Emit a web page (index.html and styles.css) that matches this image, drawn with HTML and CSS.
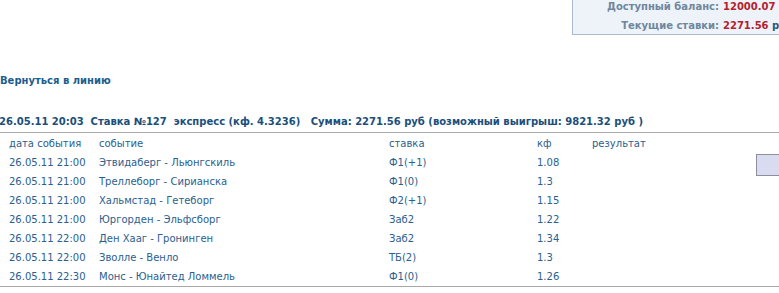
FILE: index.html
```html
<!DOCTYPE html>
<html lang="ru">
<head>
<meta charset="utf-8">
<title>Ставка №127</title>
<link rel="stylesheet" href="styles.css">
</head>
<body>
<div class="page">
  <div class="balance">
    <span class="b-label">Доступный баланс:</span><span class="b-value">12000.07 <span class="cur">руб</span></span>
    <span class="b-label">Текущие ставки:</span><span class="b-value">2271.56 <span class="cur">руб</span></span>
  </div>
  <a class="back" href="#">Вернуться в линию</a>
  <div class="headline">26.05.11 20:03&nbsp; Ставка №127&nbsp; экспресс (кф. 4.3236)&nbsp;&nbsp; Сумма: 2271.56 руб (возможный выигрыш: 9821.32 руб )</div>
  <table class="bets">
    <thead>
      <tr><th class="c-date">дата события</th><th class="c-event">событие</th><th class="c-stake">ставка</th><th class="c-kf">кф</th><th class="c-res">результат</th><th class="c-act"></th></tr>
    </thead>
    <tbody>
      <tr><td>26.05.11 21:00</td><td>Этвидаберг - Льюнгскиль</td><td>Ф1(+1)</td><td>1.08</td><td></td><td class="c-act" rowspan="7"><div class="btn"></div></td></tr>
      <tr><td>26.05.11 21:00</td><td>Треллеборг - Сирианска</td><td>Ф1(0)</td><td>1.3</td><td></td></tr>
      <tr><td>26.05.11 21:00</td><td>Хальмстад - Гетеборг</td><td>Ф2(+1)</td><td>1.15</td><td></td></tr>
      <tr><td>26.05.11 21:00</td><td>Юргорден - Эльфсборг</td><td>Заб2</td><td>1.22</td><td></td></tr>
      <tr><td>26.05.11 22:00</td><td>Ден Хааг - Гронинген</td><td>Заб2</td><td>1.34</td><td></td></tr>
      <tr><td>26.05.11 22:00</td><td>Зволле - Венло</td><td>ТБ(2)</td><td>1.3</td><td></td></tr>
      <tr><td>26.05.11 22:30</td><td>Монс - Юнайтед Ломмель</td><td>Ф1(0)</td><td>1.26</td><td></td></tr>
    </tbody>
  </table>
</div>
</body>
</html>
```
FILE: styles.css
```css
html, body {
  margin: 0;
  padding: 0;
  overflow: hidden;
  background: #ffffff;
}
.page {
  width: 900px;
  font-family: "DejaVu Sans", Verdana, sans-serif;
  font-size: 10px;
  color: #2a6090;
}
.balance {
  margin-left: 572px;
  width: 260px;
  height: 35px;
  box-sizing: border-box;
  background: #eef3f9;
  border-left: 1px solid #a9bccf;
  border-bottom: 1px solid #a9bccf;
  display: grid;
  grid-template-columns: 146px auto;
  grid-auto-rows: 12px;
  column-gap: 4px;
  align-content: start;
  padding-top: 1px;
  row-gap: 7px;
  font-weight: bold;
  font-size: 10px;
  line-height: 12px;
}
.b-label {
  text-align: right;
  color: #6f879e;
}
.b-value {
  color: #b3222e;
}
.b-value .cur {
  color: #1c5a8c;
}
.back {
  display: block;
  margin-top: 39px;
  font-weight: bold;
  color: #1c5d8e;
  text-decoration: none;
  line-height: 14px;
}
.headline {
  margin-top: 27px;
  margin-left: -1px;
  font-weight: bold;
  color: #1a4f7b;
  line-height: 14px;
  padding-bottom: 3px;
  border-bottom: 1px solid #a8a8a8;
  width: 780px;
}
.bets {
  border-collapse: collapse;
  width: 779px;
  table-layout: fixed;
  border-bottom: 1px solid #a8a8a8;
}
.bets th {
  font-weight: normal;
  text-align: left;
  color: #2a6090;
  height: 20px;
  padding: 0;
}
.bets td {
  padding: 0;
  height: 19px;
  white-space: nowrap;
  vertical-align: middle;
}
.c-date { width: 90px; padding-left: 9px !important; }
.bets td:first-child { padding-left: 9px; }
.c-event { width: 290px; }
.c-stake { width: 148px; }
.c-kf { width: 55px; }
.c-res { width: 164px; }
.c-act { width: 23px; }
.bets td.c-act {
  vertical-align: top;
  padding-top: 1px;
}
.btn {
  width: 23px;
  height: 22px;
  box-sizing: border-box;
  background: #d9dbf0;
  border: 1px solid #8e8e9e;
  border-right: none;
}
```
